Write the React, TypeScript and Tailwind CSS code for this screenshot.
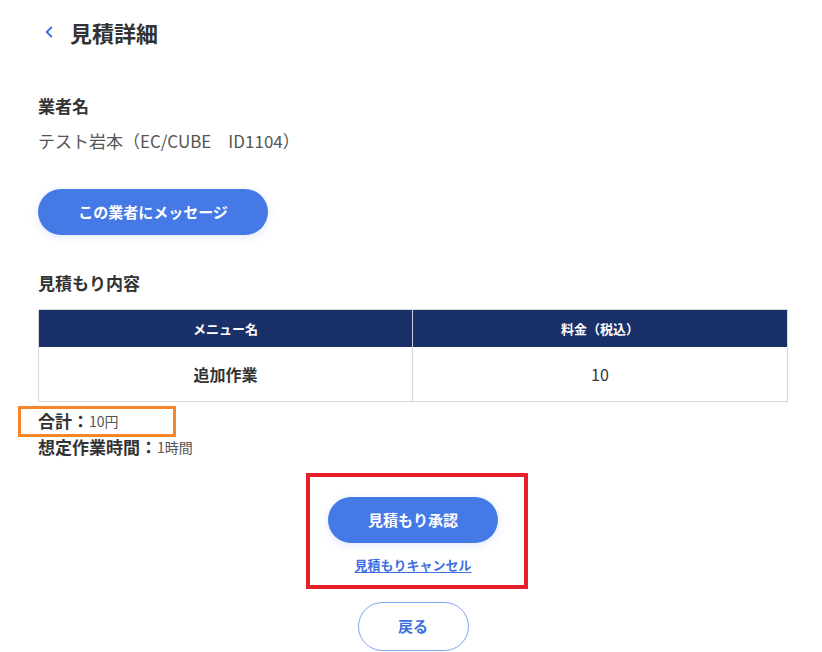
import { ChevronLeft } from 'lucide-react';

const font = { fontFamily: '"Noto Sans CJK JP", "Noto Sans", sans-serif' };

export default function App() {
  return (
    <div className="w-[822px] h-[652px] bg-white overflow-hidden text-[#333]" style={font}>
      {/* Header */}
      <div className="h-[64px] flex items-center pl-[40px] gap-[12px]">
        <ChevronLeft className="w-[18px] h-[18px] text-[#3d6fe0]" strokeWidth={2.5} />
        <h1 className="text-[22px] font-bold">見積詳細</h1>
      </div>

      <div className="pl-[38px] pr-[34px]">
        {/* Vendor */}
        <p className="mt-[30px] text-[17px] font-bold leading-[24px]">業者名</p>
        <p className="mt-[11px] text-[17px] leading-[24px] text-[#555]">テスト岩本（EC/CUBE　ID1104）</p>

        <button className="mt-[36px] w-[230px] h-[46px] rounded-full bg-[#4579e6] text-white text-[15px] font-bold shadow-[0_2px_8px_rgba(69,121,230,0.18)]">
          この業者にメッセージ
        </button>

        {/* Estimate contents */}
        <p className="mt-[36px] text-[17px] font-bold leading-[24px]">見積もり内容</p>

        <div className="mt-[14px] border border-[#d9d9d9]">
          <div className="grid grid-cols-2 h-[37px] bg-[#1a3068] text-white text-[13px] font-bold">
            <div className="flex items-center justify-center border-r border-[#c9cfdb]">メニュー名</div>
            <div className="flex items-center justify-center">料金（税込）</div>
          </div>
          <div className="grid grid-cols-2 h-[54px] text-[16px]">
            <div className="flex items-center justify-center border-r border-[#d9d9d9] font-bold">追加作業</div>
            <div className="flex items-center justify-center text-[#333]">10</div>
          </div>
        </div>

        {/* Totals */}
        <div className="relative mt-[6px] h-[26px] flex items-center">
          <div className="absolute left-[-20px] top-[-2px] w-[158px] h-[31px] border-[3px] border-[#f7862a]" />
          <span className="text-[17px] font-bold">合計：</span>
          <span className="text-[14px] text-[#555]">10円</span>
        </div>
        <div className="h-[26px] flex items-center">
          <span className="text-[17px] font-bold">想定作業時間：</span>
          <span className="text-[14px] text-[#555]">1時間</span>
        </div>

        {/* Actions */}
        <div className="mt-[13px] ml-[268px] w-[222px] h-[116px] border-[4px] border-[#e5202a] flex flex-col items-center pt-[20px] pr-[8px]">
          <button className="w-[170px] h-[46px] rounded-full bg-[#4579e6] text-white text-[15px] font-bold shadow-[0_2px_8px_rgba(69,121,230,0.18)]">
            見積もり承認
          </button>
          <a className="mt-[12px] text-[13px] font-bold leading-[20px] text-[#3d6fe0] underline underline-offset-2 cursor-pointer">
            見積もりキャンセル
          </a>
        </div>

        <div className="flex justify-center mt-[13px]">
          <button className="w-[111px] h-[49px] rounded-full border border-[#7ea3ef] bg-white text-[#3d6fe0] text-[15px] font-bold">
            戻る
          </button>
        </div>
      </div>
    </div>
  );
}
